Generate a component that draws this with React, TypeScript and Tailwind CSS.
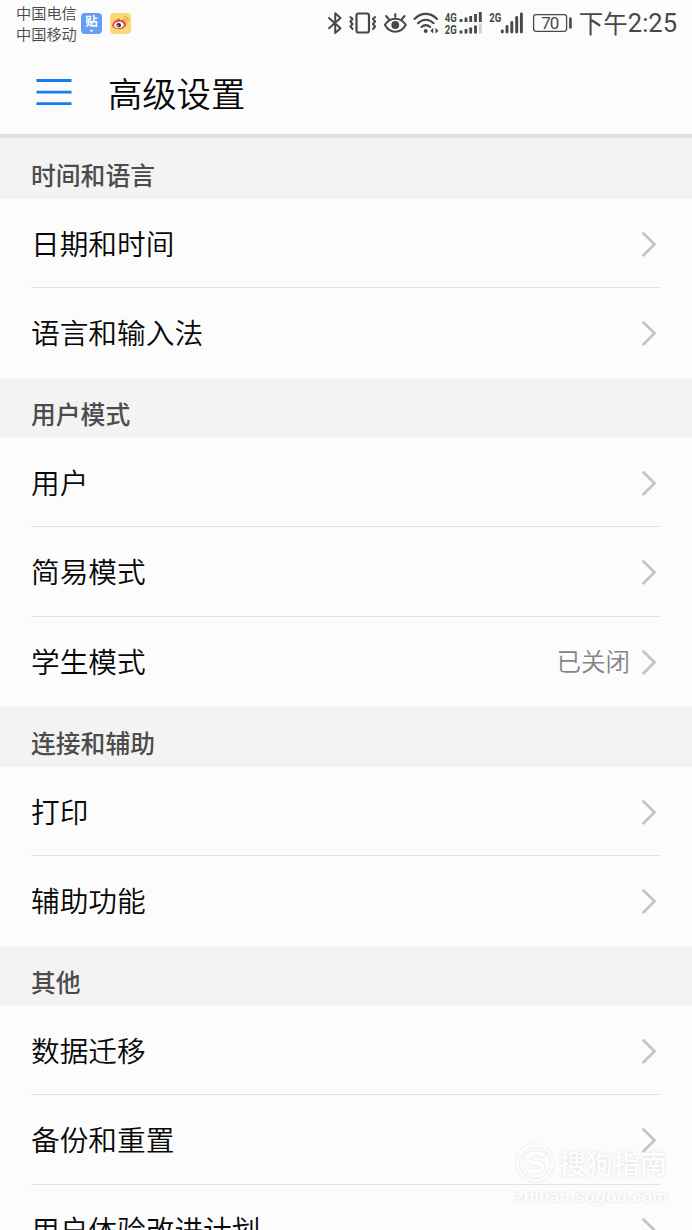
import React from 'react';

type Item = { label: string; value?: string };
type Section = { title: string; heading: string; items: Item[] };

const sections: Section[] = [
  { title: '时间和语言', heading: 'h-[60.5px]', items: [{ label: '日期和时间' }, { label: '语言和输入法' }] },
  {
    title: '用户模式',
    heading: 'h-[60px]',
    items: [{ label: '用户' }, { label: '简易模式' }, { label: '学生模式', value: '已关闭' }],
  },
  { title: '连接和辅助', heading: 'h-[60.5px]', items: [{ label: '打印' }, { label: '辅助功能' }] },
  { title: '其他', heading: 'h-[60px]', items: [{ label: '数据迁移' }, { label: '备份和重置' }, { label: '用户体验改进计划' }] },
];

function Chevron() {
  return (
    <svg width="16" height="26" viewBox="0 0 16 26" fill="none" stroke="#c4c4c4" strokeWidth="2.7" strokeLinecap="round">
      <path d="M2.500 2.500 13.500 13.300 2.500 24.200" />
    </svg>
  );
}

function Row({ item, last }: { item: Item; last: boolean }) {
  return (
    <div className="mx-[31px] h-[89.5px] shrink-0">
      <div className={`flex h-full items-center border-b ${last ? 'border-transparent' : 'border-[#e4e4e4]'}`}>
        <span className="flex-1 whitespace-nowrap text-[28.700px] font-[350] leading-[40px] text-[#080808]">{item.label}</span>
        {item.value && <span className="mr-[11px] text-[24.500px] font-[350] leading-[36px] text-[#858585]">{item.value}</span>}
        <span className="mr-[4px] pt-[2px]">
          <Chevron />
        </span>
      </div>
    </div>
  );
}

function TiebaIcon() {
  return (
    <svg className="ml-1 mt-[13px]" width="21" height="21" viewBox="0 0 21 21">
      <rect width="21" height="21" rx="4" fill="#669bf7" />
      <text x="10.5" y="13.2" textAnchor="middle" fontSize="12.5" fontWeight="700" fill="#fff">贴</text>
      <path d="M9 17.2h3l-1.5 1.8z" fill="#dbe8ff" stroke="#dbe8ff" />
    </svg>
  );
}

function WeiboIcon() {
  return (
    <svg className="ml-2 mt-[13px]" width="21" height="21" viewBox="0 0 21 21">
      <rect width="21" height="21" rx="4" fill="#fbd976" />
      <path d="M7.8 6.1c1.7-1 2.5-.2 2.2 1.2 2-.9 4.3-.8 4 1.3 1.8.5 2.6 1.7 2.1 3.3-.8 2.7-4 4.4-7.5 4.4-3.8 0-6.4-1.8-6.4-4.2 0-2 2.7-4.8 5.600-6z" fill="#e5514c" />
      <ellipse cx="8.900" cy="12.100" rx="4.900" ry="3.200" fill="#fff" transform="rotate(-8 9 12)" />
      <circle cx="8.700" cy="12.200" r="2.300" fill="#3b2a2a" />
      <circle cx="8" cy="12.800" r=".8" fill="#fff" />
      <path d="M13.800 3.800c2.900-.4 4.900 1.700 4.300 4.600M13.900 6.200c1.500-.2 2.200.6 2 1.900" fill="none" stroke="#ef9a43" strokeWidth="1.100" strokeLinecap="round" />
    </svg>
  );
}

function StatusIcons() {
  return (
    <svg width="246" height="46" viewBox="327 0 246 46" fill="none" stroke="#484848" strokeWidth="2" strokeLinecap="round" strokeLinejoin="round">
      <path d="M329 18 340.500 28.200 335.200 33V13.200L340.500 18 329 28.200" />
      <rect x="356.500" y="13.500" width="12.500" height="19" rx="2" strokeWidth="2.200" />
      <path d="M350.300 17l2.300 2-2.300 2.500 2.300 2.500-2.300 2.500 2.300 2.500M375.200 17l-2.300 2 2.300 2.500-2.300 2.500 2.300 2.500-2.300 2.500" strokeWidth="1.900" />
      <path d="M384.800 24.700C390 16.600 400.600 16.600 405.800 24.700 400.600 34 390 34 384.800 24.700zM395.300 17v-3M388.700 19l-2.600-3M402 19l2.600-3" />
      <circle cx="395.300" cy="25" r="3.900" fill="#484848" stroke="none" />
      <path d="M414.500 19C421 12.200 430.500 12.200 437 19M418 23.200C422.600 18.500 429 18.500 433.600 23.200M421.500 27C424.200 24.600 427.500 24.600 430.200 27" strokeWidth="2.100" />
      <circle cx="425.700" cy="31" r="2" fill="#484848" stroke="none" />
      <path d="M430.300 30.700l3-2.900v5.600zM438.500 30.700l-3-2.900v5.600z" fill="#484848" stroke="none" />
      <g fill="#484848" stroke="none" fontFamily="Roboto, sans-serif" fontWeight="700">
        <text x="444.800" y="22" fontSize="12.300" textLength="12" lengthAdjust="spacingAndGlyphs">4G</text>
        <text x="444.800" y="33.500" fontSize="12.300" textLength="12" lengthAdjust="spacingAndGlyphs">2G</text>
        <text x="489.200" y="22" fontSize="12.300" textLength="12" lengthAdjust="spacingAndGlyphs">2G</text>
      </g>
      <g strokeWidth="2.800" strokeLinecap="butt">
        <path d="M461 19v3M466 17.500v4.500M470.700 16v6M475.500 14v8M480.300 12v10" />
        <path d="M461 30.500v3M466 29v4.500M470.700 27.500v6M475.500 25.500v8" />
        <path d="M480.300 23.500v10" stroke="#cfcfcf" />
      </g>
      <path d="M502.300 31v1M507 26.500v5.500M511.800 22.500v9.500M516.700 17.500v14.500M521.400 14v18" strokeWidth="2.900" />
      <rect x="533.600" y="14.700" width="33" height="16.600" rx="2.500" strokeWidth="1.300" />
      <path d="M570.400 18.500v9" strokeWidth="2.600" />
      <text x="550.200" y="29" textAnchor="middle" fill="#484848" stroke="none" fontSize="17" textLength="18" fontFamily="Roboto, sans-serif">70</text>
    </svg>
  );
}

function Watermark() {
  return (
    <div className="absolute left-[515px] top-[1141px] w-[156px] text-[#fefefe] [text-shadow:0_0_3px_#dadada]">
      <div className="flex items-center">
        <svg width="40" height="42" viewBox="0 0 40 42" fill="none" className="[filter:drop-shadow(0_0_1px_#dddddd)]">
          <circle cx="20" cy="21" r="17.500" stroke="#fefefe" strokeWidth="2.500" />
          <path d="M29 13.500C23 9.500 11 11 12 17c.8 4.500 15 3 15.500 8 .5 5.500-11 6-17 2" stroke="#fefefe" strokeWidth="4" />
        </svg>
        <span className="ml-1 whitespace-nowrap pt-px text-[27px] font-medium leading-[42px]">搜狗指南</span>
      </div>
      <div className="whitespace-nowrap font-['Liberation_Sans',sans-serif] text-[17.400px] font-bold leading-6">zhinan.sogou.com</div>
    </div>
  );
}

export default function App() {
  return (
    <div className="relative flex h-[1230px] w-[692px] flex-col overflow-hidden bg-[#fcfcfc] font-['Noto_Sans_CJK_SC',sans-serif]">
      <div className="flex h-[50px] shrink-0 items-start pl-4 pr-[15px] text-[#484848]">
        <div className="pt-[2px] text-[15.200px] font-[350] leading-[20.500px]">
          <div>中国电信</div>
          <div>中国移动</div>
        </div>
        <TiebaIcon />
        <WeiboIcon />
        <div className="ml-auto flex">
          <StatusIcons />
          <div className="ml-[6px] flex h-[47px] items-center whitespace-nowrap">
            <span className="text-[24.500px]">下午</span>
            <span className="font-[Roboto,sans-serif] text-[25.500px]">2:25</span>
          </div>
        </div>
      </div>
      <header className="flex h-[88px] shrink-0 items-center border-b-4 border-[#e1e1e1] pl-9">
        <svg width="36" height="28" viewBox="0 0 36 28" stroke="#147df0" strokeWidth="2.800">
          <path d="M.5 2.500H35.500M.5 14.200H35.500M.5 25.700H35.500" />
        </svg>
        <h1 className="ml-9 text-[34.300px] font-[350] leading-[48px] text-[#080808]">高级设置</h1>
      </header>
      {sections.map((section) => (
        <section key={section.title} className="shrink-0">
          <h2 className={`flex items-center bg-[#f3f3f3] pl-[31px] pt-3 text-[24.800px] font-medium text-[#4c4c4c] ${section.heading}`}>{section.title}</h2>
          {section.items.map((item, i) => (
            <Row key={item.label} item={item} last={i === section.items.length - 1} />
          ))}
        </section>
      ))}
      <Watermark />
    </div>
  );
}
